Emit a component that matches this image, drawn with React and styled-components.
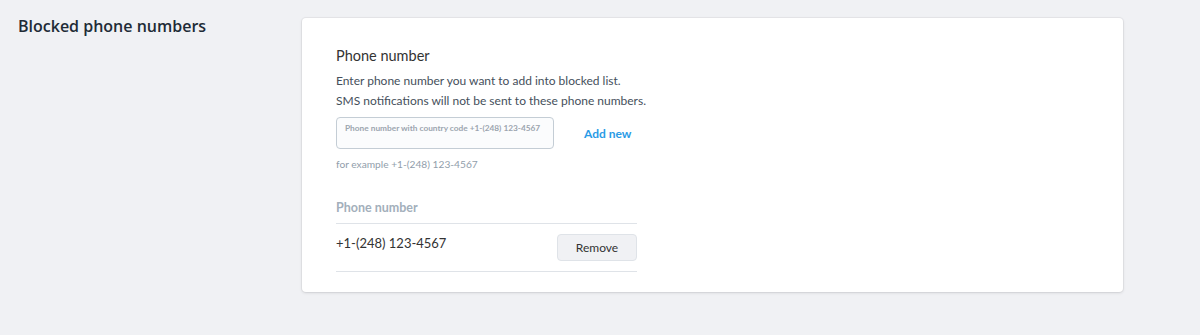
import React from 'react'
import styled, { createGlobalStyle } from 'styled-components'

const GlobalStyle = createGlobalStyle`
    body {
        margin: 0;
        background: #f0f1f4;
        font-family: Lato, "Open Sans", sans-serif;
        color: #212b36;
    }
`

const Page = styled.div`
    display: flex;
    align-items: flex-start;
    padding: 18px 77px 40px 18px;
`

const Aside = styled.div`
    width: 284px;
    flex-shrink: 0;
`

const Heading = styled.h2`
    margin: -4px 0 0;
    font-family: "Open Sans", sans-serif;
    font-size: 16px;
    line-height: 24px;
    font-weight: 600;
    color: #212b36;
`

const Card = styled.div`
    flex: 1;
    background: #fff;
    border-radius: 4px;
    box-shadow: 0 0 0 1px rgba(63, 63, 68, 0.05), 0 1px 3px 0 rgba(63, 63, 68, 0.15);
    padding: 28px 34px 20px;
`

const Section = styled.div`
    width: 301px;
`

const Title = styled.h3`
    margin: 0 0 5px;
    font-size: 14.5px;
    line-height: 20px;
    font-weight: 400;
    color: #333;
`

const Text = styled.p`
    margin: 0;
    font-size: 12px;
    line-height: 20px;
    color: #454f5b;
    white-space: nowrap;
`

const AddRow = styled.div`
    display: flex;
    align-items: center;
    gap: 30px;
    margin-top: 6px;
`

const Input = styled.div`
    width: 218px;
    height: 32px;
    box-sizing: border-box;
    border: 1px solid #c4cdd5;
    border-radius: 4px;
    background: #fbfcfd;
    padding: 3px 8px;
    font-size: 8.3px;
    line-height: 14px;
    font-weight: 700;
    color: #9ca5af;
    white-space: nowrap;
    overflow: hidden;
`

const LinkButton = styled.span`
    font-size: 12px;
    font-weight: 700;
    color: #2a9be6;
`

const Hint = styled.div`
    margin-top: 7px;
    font-size: 10.2px;
    line-height: 16px;
    color: #919eab;
`

const Table = styled.div`
    margin-top: 28px;
`

const HeadCell = styled.div`
    font-size: 12.5px;
    line-height: 16px;
    font-weight: 700;
    color: #a3afbb;
    padding-bottom: 7px;
    border-bottom: 1px solid #dfe3e8;
`

const Row = styled.div`
    display: flex;
    align-items: flex-start;
    justify-content: space-between;
    padding: 10px 0 10px;
    border-bottom: 1px solid #dfe3e8;
`

const Number = styled.span`
    font-size: 13px;
    line-height: 18px;
    color: #333;
`

const Button = styled.button`
    width: 80px;
    height: 27px;
    border: 1px solid #dfe3e8;
    border-radius: 4px;
    background: #f0f1f4;
    font-family: inherit;
    font-size: 12px;
    color: #333;
`

const App = () => {
    return (
        <>
            <GlobalStyle />
            <Page>
                <Aside>
                    <Heading>Blocked phone numbers</Heading>
                </Aside>
                <Card>
                    <Section>
                        <Title>Phone number</Title>
                        <Text>Enter phone number you want to add into blocked list.</Text>
                        <Text>SMS notifications will not be sent to these phone numbers.</Text>
                        <AddRow>
                            <Input>Phone number with country code +1-(248) 123-4567</Input>
                            <LinkButton>Add new</LinkButton>
                        </AddRow>
                        <Hint>for example +1-(248) 123-4567</Hint>
                        <Table>
                            <HeadCell>Phone number</HeadCell>
                            <Row>
                                <Number>+1-(248) 123-4567</Number>
                                <Button>Remove</Button>
                            </Row>
                        </Table>
                    </Section>
                </Card>
            </Page>
        </>
    )
}

export default App
